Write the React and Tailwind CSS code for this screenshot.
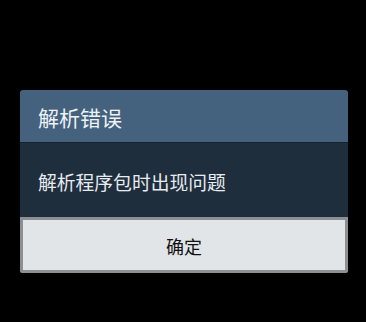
const App = () => {
  return (
    <div
      className="w-[366px] h-[322px] bg-black pt-[90px] px-[20px]"
      style={{ fontFamily: '"Noto Sans CJK SC", "Noto Sans", sans-serif' }}
    >
      <div className="w-[328px] rounded-t-[3px] overflow-hidden">
        <div className="h-[53px] bg-[#44617e] border-b border-[#16222e] flex items-center pl-[18px] pt-[2px]">
          <span className="text-[21px] text-[#eef2f6] leading-none">解析错误</span>
        </div>
        <div className="h-[74px] bg-[#1f2e3d] flex items-center pl-[18px] pt-[4px]">
          <span className="text-[18.8px] text-[#e8ecef] leading-none">解析程序包时出现问题</span>
        </div>
        <div className="h-[56px] bg-[#8c9093] p-[3px] rounded-b-[2px]">
          <button className="w-full h-full bg-[#e1e5e8] flex items-center justify-center pt-[1px]">
            <span className="text-[18px] text-[#111] leading-none">确定</span>
          </button>
        </div>
      </div>
    </div>
  );
};

export default App;
